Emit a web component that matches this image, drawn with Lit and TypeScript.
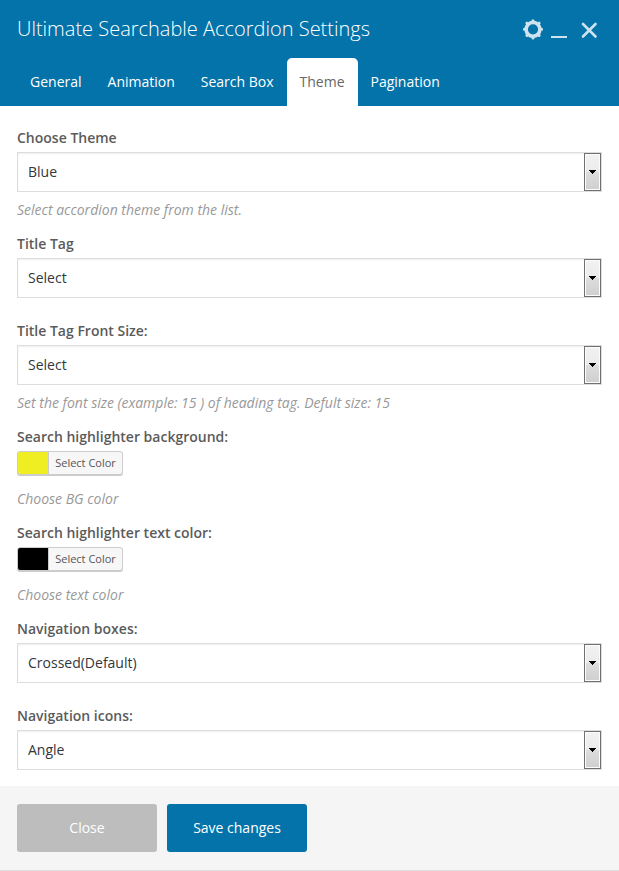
import { LitElement, html, css, nothing } from "lit";
import { customElement, state } from "lit/decorators.js";
import { classMap } from "lit/directives/class-map.js";
import { styleMap } from "lit/directives/style-map.js";

interface Field {
  id: string;
  label: string;
  kind: "select" | "color";
  options?: string[];
  color?: string;
  hint?: string;
}

const TABS = ["General", "Animation", "Search Box", "Theme", "Pagination"];

const FIELDS: Field[] = [
  { id: "theme", label: "Choose Theme", kind: "select", options: ["Blue"], hint: "Select accordion theme from the list." },
  { id: "title-tag", label: "Title Tag", kind: "select", options: ["Select"] },
  { id: "title-size", label: "Title Tag Front Size:", kind: "select", options: ["Select"], hint: "Set the font size (example: 15 ) of heading tag. Defult size: 15" },
  { id: "bg-color", label: "Search highlighter background:", kind: "color", color: "#eeee22", hint: "Choose BG color" },
  { id: "text-color", label: "Search highlighter text color:", kind: "color", color: "#000000", hint: "Choose text color" },
  { id: "nav-boxes", label: "Navigation boxes:", kind: "select", options: ["Crossed(Default)"] },
  { id: "nav-icons", label: "Navigation icons:", kind: "select", options: ["Angle"] },
];

@customElement("app-root")
export class AppRoot extends LitElement {
  @state() private tab = "Theme";

  static styles = css`
    :host {
      display: block;
      background: #fff;
      color: #5b5b5b;
      font: 14px/20px "Open Sans", "Noto Sans", sans-serif;
    }
    * {
      box-sizing: border-box;
    }
    button,
    select {
      font: inherit;
      margin: 0;
      border-radius: 0;
    }
    header {
      background: #0473aa;
      padding: 0 17px;
    }
    .titlebar {
      display: flex;
      align-items: center;
      justify-content: space-between;
      height: 58px;
    }
    h1 {
      margin: 0;
      font-size: 20px;
      line-height: 28px;
      font-weight: 300;
      color: #fff;
    }
    .controls {
      display: flex;
      gap: 4px;
    }
    .controls button {
      display: flex;
      padding: 0;
      border: 0;
      background: none;
      color: #cde3ee;
    }
    .controls svg {
      width: 24px;
      height: 24px;
      display: block;
    }
    .tabs {
      display: flex;
    }
    .tab {
      height: 48px;
      padding: 0 13px;
      border: 0;
      border-radius: 5px 5px 0 0;
      background: none;
      color: #fff;
    }
    .tab.active {
      background: #fff;
      color: #666;
    }
    .fields {
      padding: 22px 17px 16px;
    }
    .field {
      margin-bottom: 23px;
    }
    .field.hinted {
      margin-bottom: 14px;
    }
    .field:last-child {
      margin-bottom: 0;
    }
    label {
      display: block;
      margin-bottom: 4px;
      font-weight: 600;
    }
    .select {
      position: relative;
    }
    select {
      appearance: none;
      display: block;
      width: 100%;
      height: 40px;
      padding: 0 28px 0 10px;
      border: 1px solid #ddd;
      background: #fff;
      box-shadow: inset 0 1px 2px rgba(0, 0, 0, 0.07);
      color: #32373c;
    }
    .arrow {
      position: absolute;
      top: 1px;
      right: 1px;
      bottom: 1px;
      width: 17px;
      display: flex;
      align-items: center;
      justify-content: center;
      border: 1px solid #707070;
      box-shadow: inset 0 0 0 1px #fcfcfc;
      background: linear-gradient(#f2f2f2 0, #ebebeb 50%, #dddddd 50%, #cfcfcf 100%);
      pointer-events: none;
    }
    .arrow svg {
      width: 7px;
      height: 4px;
    }
    .hint {
      margin: 8px 0 0;
      font-style: italic;
      color: #999;
    }
    .color + .hint {
      margin-top: 14px;
    }
    .color {
      display: flex;
      width: 106px;
      height: 24px;
      padding: 0;
      overflow: hidden;
      border: 1px solid #ccc;
      border-radius: 3px;
      background: #f7f7f7;
      box-shadow: 0 1px 0 #ccc;
      color: #555;
      font-size: 11px;
      line-height: 22px;
    }
    .swatch {
      width: 30px;
      height: 22px;
    }
    .caption {
      flex: 1;
      border-left: 1px solid #ccc;
      text-align: center;
    }
    footer {
      display: flex;
      gap: 10px;
      padding: 18px 17px;
      background: #f5f5f5;
      border-bottom: 1px solid #ddd;
    }
    .action {
      width: 140px;
      height: 48px;
      padding: 0;
      border: 0;
      border-radius: 3px;
      background: #bdbdbd;
      color: #fff;
    }
    .action.primary {
      background: #0473aa;
    }
  `;

  private renderControl(f: Field) {
    if (f.kind === "color") {
      return html`<button class="color" id=${f.id} type="button">
        <span class="swatch" style=${styleMap({ background: f.color ?? "" })}></span>
        <span class="caption">Select Color</span>
      </button>`;
    }
    return html`<div class="select">
      <select id=${f.id}>
        ${f.options?.map((o) => html`<option>${o}</option>`)}
      </select>
      <span class="arrow">
        <svg viewBox="0 0 7 4" shape-rendering="crispEdges" aria-hidden="true">
          <path d="M0 0H7V1H6V2H5V3H4V4H3V3H2V2H1V1H0Z" fill="#000" />
        </svg>
      </span>
    </div>`;
  }

  render() {
    return html`
      <header>
        <div class="titlebar">
          <h1>Ultimate Searchable Accordion Settings</h1>
          <div class="controls">
            <button type="button" aria-label="Settings">
              <svg viewBox="0 0 24 24">
                <g transform="translate(11 12.3)">
                  <circle r="6.9" fill="none" stroke="currentColor" stroke-width="3.6" />
                  <path
                    d="M0-8.6V8.6M-8.6 0H8.6M-6.1-6.1 6.1 6.1M6.1-6.1-6.1 6.1"
                    stroke="currentColor" stroke-width="3" stroke-linecap="round" stroke-dasharray="1.5 14.2 1.5 0" fill="none"
                  />
                </g>
              </svg>
            </button>
            <button type="button" aria-label="Minimize">
              <svg viewBox="0 0 24 24"><path d="M1 20H17" fill="none" stroke="currentColor" stroke-width="2" /></svg>
            </button>
            <button type="button" aria-label="Close window">
              <svg viewBox="0 0 24 24">
                <path d="M5 7 17.5 19.5M17.5 7 5 19.5" fill="none" stroke="currentColor" stroke-width="2.6" stroke-linecap="round" />
              </svg>
            </button>
          </div>
        </div>
        <nav class="tabs" role="tablist">
          ${TABS.map(
            (t) => html`<button
              type="button"
              role="tab"
              aria-selected=${t === this.tab ? "true" : "false"}
              class=${classMap({ tab: true, active: t === this.tab })}
              @click=${() => (this.tab = t)}
            >${t}</button>`
          )}
        </nav>
      </header>
      <main class="fields">
        ${FIELDS.map(
          (f) => html`<div class=${classMap({ field: true, hinted: !!f.hint })}>
            <label for=${f.id}>${f.label}</label>
            ${this.renderControl(f)}
            ${f.hint ? html`<p class="hint">${f.hint}</p>` : nothing}
          </div>`
        )}
      </main>
      <footer>
        <button class="action" type="button">Close</button>
        <button class="action primary" type="button">Save changes</button>
      </footer>
    `;
  }
}
